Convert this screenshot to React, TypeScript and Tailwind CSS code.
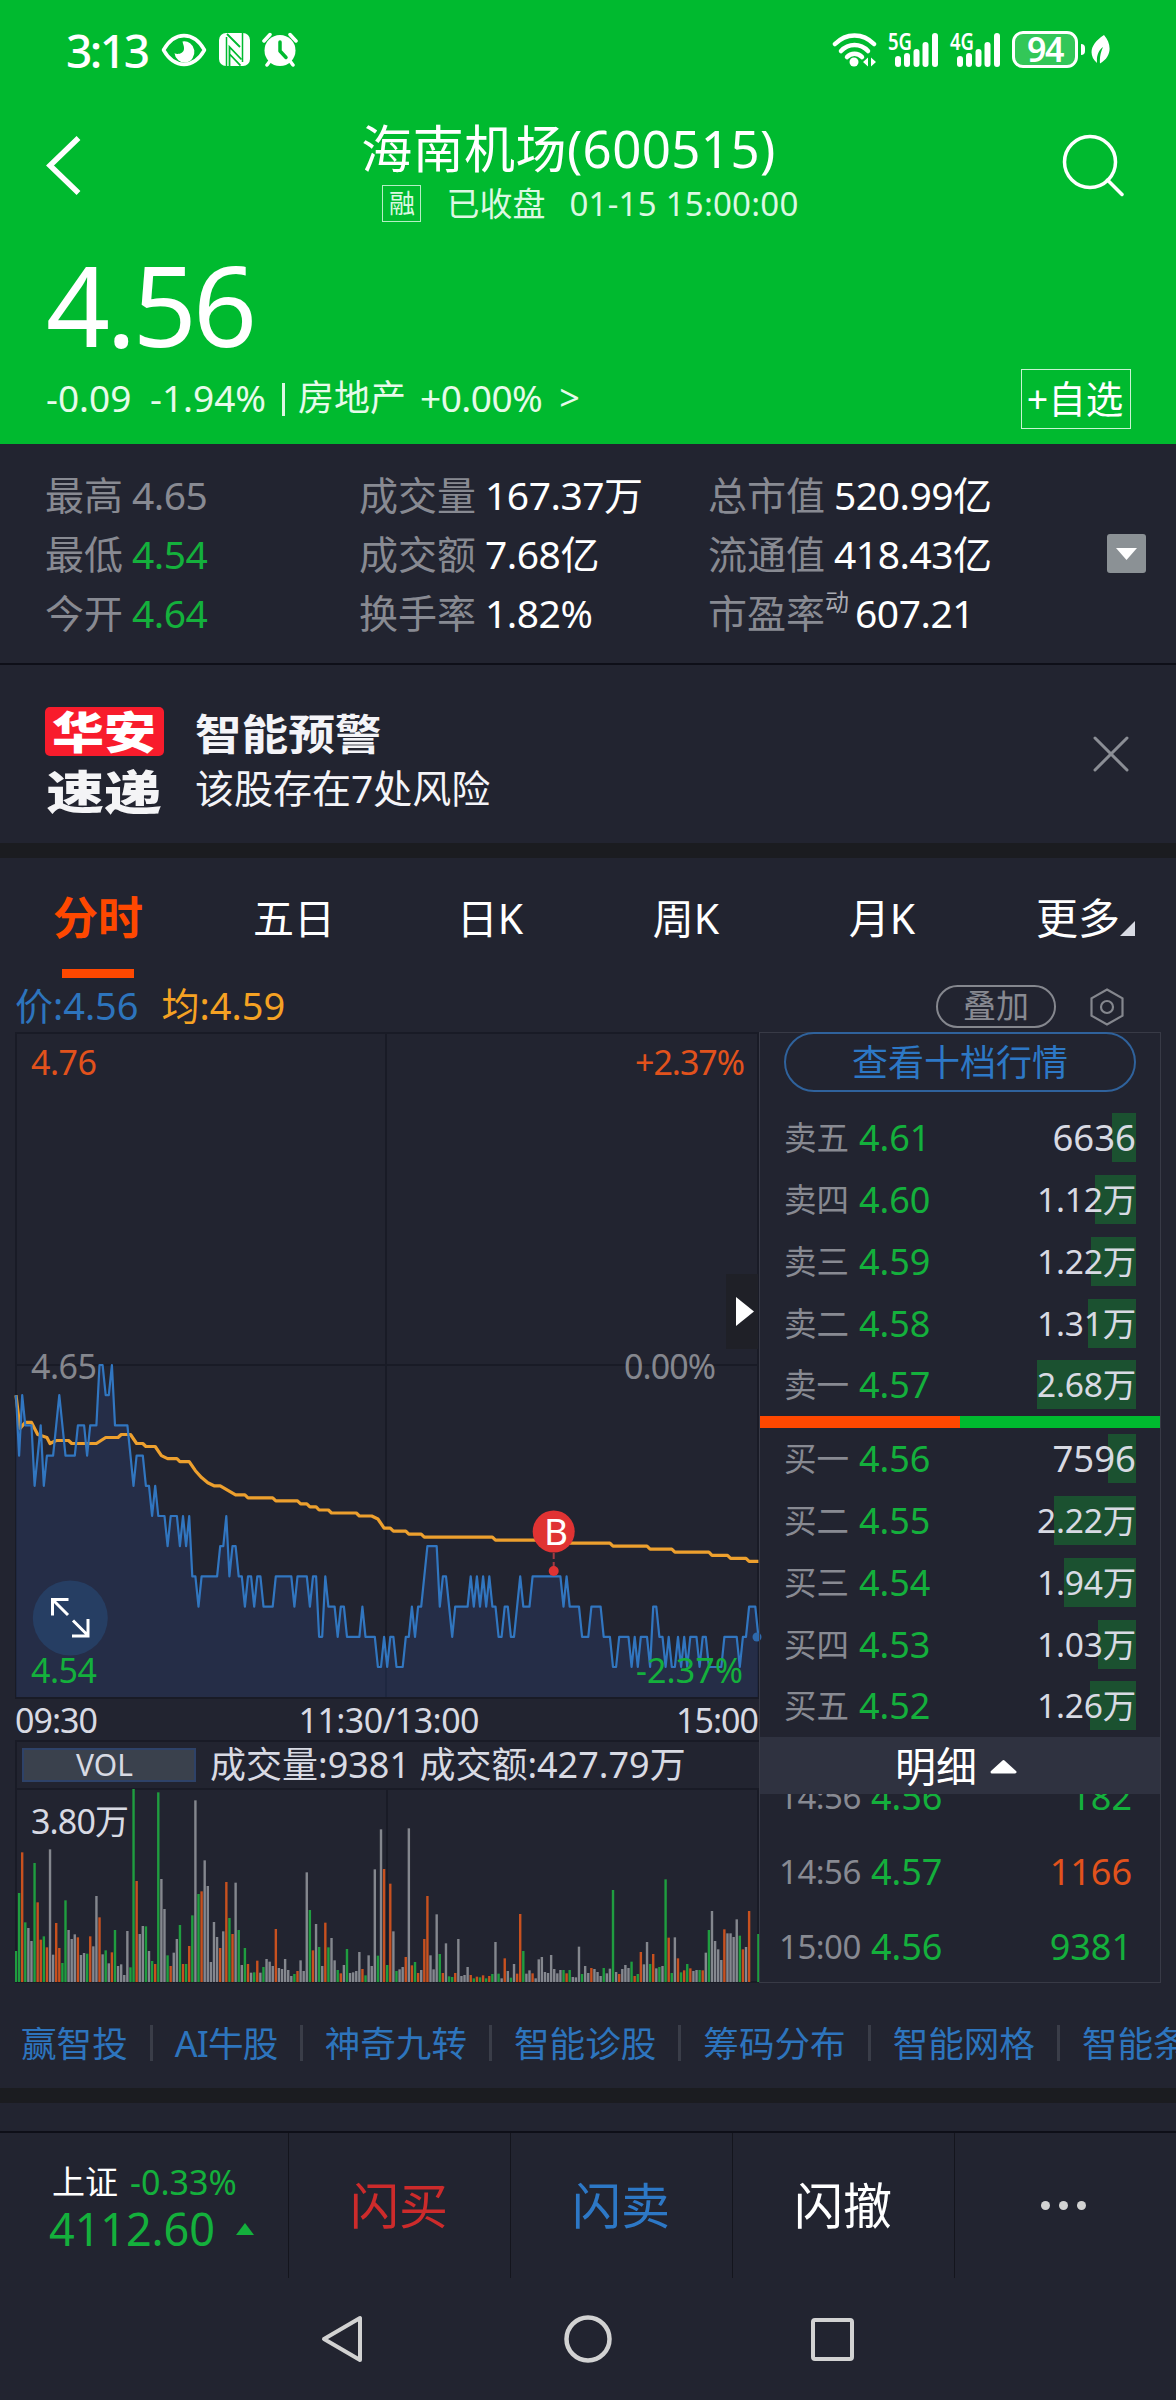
import { clsx } from 'clsx';

// Price per minute, in cents below the previous close (4.65), one hex digit each
const PRICES = (
  '1312224324' + '3332123333' + '2223222001' + '1022222343' + '3344545556' + '5556565778' +
  '7777776657' + '6677877877' + '8888777777' + '8777787799' + '7888988999' + '9989999aa9' +
  'a99aaa9989' + '8876666877' + '8988888787' + '8787889988' + '9987888777' + '7777777878' +
  '8889998888' + '999aa9999a' + '9a999a8899' + 'a9aa9a9a99' + '9a99aaaaa9' + '9999a99888' + '9'
).split('').map((c) => parseInt(c, 16));

// Average price: [minute, thousandths below the previous close]
const AVERAGE = [
  [0, 10], [1.3, 21], [3, 19], [5, 19], [7, 23], [10, 24], [11, 26], [13, 25], [17, 25], [18, 26],
  [26, 26], [29, 24], [33, 24], [34, 23], [37, 23], [39, 26], [41, 26], [42, 27], [45, 27], [47, 30],
  [49, 31], [52, 31], [53, 32], [56, 32], [58, 35], [60, 37.3], [62, 39], [64, 40], [66, 40], [71, 43],
  [74, 43], [75, 44], [83, 44], [84, 45], [91, 45], [92, 46], [94, 46], [95, 47], [97, 47], [98, 48],
  [101, 48], [102, 49], [110, 49], [111, 50], [115, 50], [117, 51], [119, 54], [121, 54], [122, 55],
  [126, 55], [127, 56], [131, 56], [132, 57], [154, 57], [155, 58], [173, 58], [174, 59], [192, 59],
  [193, 60], [204, 60], [205, 61], [212, 61], [213, 62], [224, 62], [225, 63], [230, 63], [231, 64],
  [236, 64], [237, 65], [240, 65],
];

// Volume per minute: direction (g fall, r rise, w flat) and height
const VOLUMES = `
g93 g267 r389 g179 w162 w123 g357 r239 r127 g137 r104 w398 w82 r177 r102 g57 g245 w156 w129 w143
r134 w81 w87 g85 r137 w107 w258 r194 w83 g95 w56 r89 g156 w48 w53 w21 w153 g44 g579 r303
w144 w168 g167 w93 g63 r54 g569 w309 w219 g80 r48 w88 w129 g171 r54 g54 r108 g200 w545 g264
r272 w365 w288 w60 w180 w135 r102 w152 r300 g192 r144 w298 g156 w51 g102 r54 w28 g29 r64 w28
g45 w69 w61 w48 r159 w42 w39 w69 w36 w18 g24 r33 w65 w33 w329 g216 r95 w174 g105 w48
r178 g104 w132 w65 g36 r26 w51 g99 w27 w29 w33 w90 r39 g20 w80 w48 w338 g79 w458 r339
g51 r295 w152 g33 w38 w45 r75 w461 r50 g60 r27 w36 r129 r258 w80 w38 w203 g84 r27 w116
g17 g15 r27 w129 w18 w21 w45 r21 g11 r16 g14 r20 g11 r18 g24 w120 g25 w11 r71 w33
g13 w54 r25 r204 g93 w25 w35 r26 w11 w68 w75 w30 w27 w81 w39 w26 w36 g36 r26 g36
w15 w14 w106 g24 w48 w27 r42 w39 w30 w18 g42 w26 w40 g276 w30 r24 w39 w51 w42 g61
r18 g24 r90 w53 w120 g54 r84 w41 g45 w48 g308 r133 g27 w134 r71 g29 r35 g54 r41 w33
w36 g36 r35 w88 g156 w213 w123 w98 w66 r158 w146 w146 w135 w188 g139 r98 w105 r213 w0 w0 g144
`.trim().split(/\s+/);

const VOLUME_COLORS: Record<string, string> = { g: '#1f9d3f', r: '#c8511f', w: '#84878e' };

const STEP = 3.0933;
const px = (minute: number) => 1 + minute * STEP;
const py = (cents: number) => 333 + cents * 30.2;

const pricePoints = PRICES.map((c, i) => `${px(i).toFixed(1)},${py(c).toFixed(1)}`).join(' ');
const averagePoints = AVERAGE.map(([m, t]) => `${px(m).toFixed(1)},${py(t / 10).toFixed(1)}`).join(' ');

const TABS = ['分时', '五日', '日K', '周K', '月K', '更多'];

const ASKS = [
  { label: '卖五', price: '4.61', volume: '6636', bar: 24 },
  { label: '卖四', price: '4.60', volume: '1.12万', bar: 41 },
  { label: '卖三', price: '4.59', volume: '1.22万', bar: 45 },
  { label: '卖二', price: '4.58', volume: '1.31万', bar: 48 },
  { label: '卖一', price: '4.57', volume: '2.68万', bar: 99 },
];

const BIDS = [
  { label: '买一', price: '4.56', volume: '7596', bar: 28 },
  { label: '买二', price: '4.55', volume: '2.22万', bar: 82 },
  { label: '买三', price: '4.54', volume: '1.94万', bar: 72 },
  { label: '买四', price: '4.53', volume: '1.03万', bar: 38 },
  { label: '买五', price: '4.52', volume: '1.26万', bar: 46 },
];

const TRADES = [
  { time: '14:56', price: '4.56', volume: '182', up: false },
  { time: '14:56', price: '4.57', volume: '1166', up: true },
  { time: '15:00', price: '4.56', volume: '9381', up: false },
];

const LINKS = ['赢智投', 'AI牛股', '神奇九转', '智能诊股', '筹码分布', '智能网格', '智能条件单'];

function SignalBars({ label }: { label: string }) {
  return (
    <svg className="h-[36px] w-[52px] overflow-visible" viewBox="0 0 52 36" fill="#fff">
      <text x="0" y="18" fontSize="23" fontWeight="600" textLength="24" lengthAdjust="spacingAndGlyphs">
        {label}
      </text>
      <rect x="7" y="24" width="6" height="11" rx="3" />
      <rect x="16" y="21" width="6" height="14" rx="3" />
      <rect x="25.500" y="17" width="6" height="18" rx="3" />
      <rect x="34.500" y="10" width="6" height="25" rx="3" />
      <rect x="44" y="1" width="6" height="34" rx="3" />
    </svg>
  );
}

function StatusBar() {
  return (
    <div className="flex h-[99px] items-center pl-[66px] pr-[66px]">
      <span className="w-[95px] text-[46px] font-medium leading-[60px] tracking-[-2.500px]">3:13</span>
      {/* Eye comfort */}
      <svg className="h-[34px] w-[46px]" viewBox="0 0 46 32" preserveAspectRatio="none">
        <path
          d="M2.500 16C8 7 15 2.500 23 2.500S38 7 43.500 16C38 25 31 29.500 23 29.500S8 25 2.500 16z"
          fill="none"
          stroke="#fff"
          strokeWidth="3.500"
          strokeLinejoin="round"
        />
        <path d="M21.500 8a10 10 0 1 1-8 11c3 1.500 9 .5 9.500-4 .3-3-1-4-1.500-7z" fill="#fff" />
      </svg>
      {/* NFC */}
      <svg className="ml-[12px] h-[33px] w-[31px]" viewBox="0 0 31 33">
        <rect width="31" height="33" rx="7" fill="#fff" />
        <path d="M7.500 4v29M23.500 0v29" stroke="#00ba2f" strokeWidth="1.500" />
        <path d="M10.500 33V14l12 12.500M8 1l13 13M10.500 21l11 11.500" fill="none" stroke="#00ba2f" strokeWidth="1.800" />
      </svg>
      {/* Alarm */}
      <svg className="ml-[12px] h-[35px] w-[36px]" viewBox="0 0 36 35">
        <circle cx="18" cy="18.500" r="15.500" fill="#fff" />
        <path d="M2 9l6-6.500M34 9l-6-6.500M8 29l-3 4M28 29l3 4" stroke="#fff" strokeWidth="3.500" strokeLinecap="round" />
        <path d="M18 10v9l6 6.500" fill="none" stroke="#00ba2f" strokeWidth="3.500" strokeLinecap="round" strokeLinejoin="round" />
      </svg>

      {/* Wi-Fi */}
      <svg className="ml-auto h-[36px] w-[46px]" viewBox="0 0 46 36" fill="none" stroke="#fff" strokeWidth="4.500" strokeLinecap="round">
        <path d="M3 12c11-11.500 28-11.500 39 0" />
        <path d="M9 19c7.500-8 19.500-8 27 0" />
        <path d="M15 25c4-4.500 11-4.500 15 0" />
        <circle cx="22" cy="30" r="4.500" fill="#fff" stroke="none" />
        <path d="M36 25.500v9l-5-4.500zM39 25.500v9l5-4.500z" fill="#fff" stroke="none" />
      </svg>
      <div className="ml-[10px] flex gap-[10px]">
        <SignalBars label="5G" />
        <SignalBars label="4G" />
      </div>
      {/* Battery */}
      <div className="ml-[10px] flex items-center">
        <div className="flex h-[37px] w-[66px] items-center justify-center rounded-[11px] border-[3px] border-white bg-white/20">
          <span className="text-[34px] font-semibold leading-[31px] tracking-[-1.500px]">94</span>
        </div>
        <div className="ml-[3px] h-[11px] w-[4px] rounded-r bg-white" />
      </div>
      <svg className="ml-[6px] h-[30px] w-[19px]" viewBox="0 0 19 30">
        <path d="M13 0c8 9 8 22-4 28.500-.5-5.500.5-11 3-16.500-5 4-6.500 9-6 16C-3 20-1 9 13 0z" fill="#fff" />
      </svg>
    </div>
  );
}

function Header() {
  return (
    <header className="h-[444px] bg-[#00ba2f] text-white">
      <StatusBar />
      <div className="flex h-[137px] items-start justify-between pl-[46px] pr-[52px]">
        <svg className="mt-[36px] h-[60px] w-[36px]" viewBox="0 0 36 60" fill="none" stroke="#fff" strokeWidth="5.500">
          <path d="M32.500 3L4 30.500 32.500 58" />
        </svg>
        <div className="-ml-[7px] mt-[14px] flex flex-col items-center">
          <h1 className="whitespace-nowrap text-[51px] leading-[70px] tracking-[0.400px]">海南机场(600515)</h1>
          <div className="ml-[44px] mt-[2px] flex h-[37px] items-center whitespace-nowrap text-[33px] leading-[37px] text-[#dcf8e2]">
            <span className="mr-[25px] flex h-[37px] w-[39px] items-center justify-center border border-[#b5efc4] text-[26px]">
              融
            </span>
            <span>已收盘</span>
            <span className="ml-[24px] tracking-[0.250px]">01-15 15:00:00</span>
          </div>
        </div>
        <svg className="mt-[35px] h-[64px] w-[62px]" viewBox="0 0 62 64" fill="none" stroke="#fff" strokeWidth="3.500" strokeLinecap="round">
          <circle cx="28" cy="28" r="25.500" />
          <path d="M45.500 46L60 60.500" />
        </svg>
      </div>
      <div className="h-[133px] pl-[46px] text-[112px] leading-[136px] tracking-[-3.700px]">4.56</div>
      <div className="flex h-[60px] items-center whitespace-nowrap pl-[46px] pr-[45px] text-[37px] leading-[60px] text-[#e6fbea]">
        <span className="-mt-[3px] w-[104px]">-0.09</span>
        <span className="-mt-[3px] w-[132px]">-1.94%</span>
        <span className="h-[33px] w-[3px] bg-[#dcf8e2]" />
        <span className="-mt-[3px] ml-[13px] text-[36px]">房地产</span>
        <span className="-mt-[3px] ml-[14px] tracking-[-0.500px]">+0.00%</span>
        <span className="-mt-[3px] ml-[17px] text-[36px]">&gt;</span>
        <button className="ml-auto flex h-[60px] w-[110px] items-center justify-center border border-[#c8f4d2] pr-[2px] text-[37.500px] text-white">
          +自选
        </button>
      </div>
    </header>
  );
}

function Stat({ label, sup, value, tone }: { label: string; sup?: string; value: string; tone?: string }) {
  return (
    <div className="flex h-[59px] items-center whitespace-nowrap text-[39px] leading-[59px]">
      <span className="text-[#888a92]">{label}</span>
      {sup && <span className="mb-[22px] text-[24px] leading-[24px] text-[#a9abb2]">{sup}</span>}
      <span className={clsx('tracking-[-0.500px]', sup ? 'ml-[6px]' : 'ml-[9px]', tone ?? 'text-white')}>{value}</span>
    </div>
  );
}

function Stats() {
  return (
    <section className="flex h-[221px] items-start border-b-2 border-[#0e0f18] pl-[45px] pt-[21px]">
      <div className="w-[314px]">
        <Stat label="最高" value="4.65" tone="text-[#888a92]" />
        <Stat label="最低" value="4.54" tone="text-[#14b03c]" />
        <Stat label="今开" value="4.64" tone="text-[#14b03c]" />
      </div>
      <div className="w-[349px]">
        <Stat label="成交量" value="167.37万" />
        <Stat label="成交额" value="7.68亿" />
        <Stat label="换手率" value="1.82%" />
      </div>
      <div className="w-[399px]">
        <Stat label="总市值" value="520.99亿" />
        <Stat label="流通值" value="418.43亿" />
        <Stat label="市盈率" sup="动" value="607.21" />
      </div>
      <button className="mt-[69px] flex h-[39px] w-[39px] items-center justify-center rounded-[3px] bg-[#8b9195]">
        <svg className="h-[12px] w-[21px]" viewBox="0 0 21 12">
          <path d="M0 0h21L10.500 12z" fill="#fff" />
        </svg>
      </button>
    </section>
  );
}

function Alert() {
  return (
    <section className="flex h-[178px] items-start pl-[45px] pr-[47px] pt-[41px]">
      <div className="mt-px w-[150px] text-[44px] font-black leading-[48px] text-white">
        <div className="flex h-[49px] w-[119px] items-center justify-center rounded-[5px] bg-[#f81c2c]">
          <span className="-ml-[2px] inline-block scale-x-[1.180]">华安</span>
        </div>
        <div className="mt-[11px] flex w-[117px] justify-center text-[46px] text-[#f4f4f6]">
          <span className="inline-block scale-x-[1.250]">速递</span>
        </div>
      </div>
      <div className="whitespace-nowrap text-[#f4f4f8]">
        <div className="origin-left scale-x-[1.110] text-[42px] font-bold leading-[56px]">智能预警</div>
        <div className="text-[39px] leading-[52px]">该股存在7处风险</div>
      </div>
      <svg className="ml-auto mt-[30px] h-[36px] w-[36px]" viewBox="0 0 36 36" stroke="#8b8e95" strokeWidth="3" strokeLinecap="round">
        <path d="M2 2l32 32M34 2L2 34" />
      </svg>
    </section>
  );
}

function Tabs() {
  return (
    <nav className="grid h-[120px] grid-cols-6 text-[41px] text-white">
      {TABS.map((tab, i) => (
        <div key={tab} className="flex flex-col items-center pt-[30px]">
          {i === 0 ? (
            <>
              <span className="text-[45px] font-bold leading-[60px] text-[#ff4800]">{tab}</span>
              <span className="mt-[21px] h-[9px] w-[72px] bg-[#ff4800]" />
            </>
          ) : (
            <span className={clsx('flex items-end leading-[60px]', i === 5 && 'pl-[15px] text-[42px]')}>
              {tab}
              {i === 5 && (
                <svg className="mb-[12px] h-[15px] w-[15px]" viewBox="0 0 15 15">
                  <path d="M15 0v15H0z" fill="#d8dae3" />
                </svg>
              )}
            </span>
          )}
        </div>
      ))}
    </nav>
  );
}

function Legend() {
  return (
    <div className="flex h-[54px] items-center pl-[15px] pr-[52px] text-[38px] leading-[54px]">
      <span className="text-[#2d74bd]">价:4.56</span>
      <span className="ml-[23px] text-[#f5a223]">均:4.59</span>
      <button className="ml-auto mt-[2px] flex h-[43px] w-[120px] items-center justify-center rounded-full border-2 border-[#85878e] text-[33px] leading-[38px] text-[#888a92]">
        叠加
      </button>
      <svg className="ml-[34px] mt-[3px] h-[38px] w-[34px]" viewBox="0 0 34 38" fill="none" stroke="#85878e" strokeWidth="2.200">
        <path d="M17 1.500l15.500 8.800v17.400L17 36.500 1.500 27.700V10.300z" />
        <circle cx="17" cy="19" r="6" />
      </svg>
    </div>
  );
}

function PriceChart() {
  return (
    <svg className="block h-[708px] w-[744px] overflow-visible" viewBox="0 0 744 708" fontSize="34">
      <g fill="none" stroke="#191b26" strokeWidth="2">
        <path d="M1 666V1h742v665M371 1v665M1 333h741" />
      </g>
      <polygon points={`1,665 ${pricePoints} 743,665`} fill="#2a427a" fillOpacity="0.320" />
      <path d="M0 666h744" stroke="#191b26" strokeWidth="2" />
      <polyline points={averagePoints} fill="none" stroke="#eda02e" strokeWidth="3.200" strokeLinejoin="round" />
      <polyline points={pricePoints} fill="none" stroke="#3176c0" strokeWidth="2.200" strokeLinejoin="round" />
      <circle cx="742" cy="605" r="4.500" fill="#2d69ad" />

      {/* Buy marker */}
      <path d="M538.700 521v16" stroke="#a33a42" strokeWidth="2" strokeDasharray="6 3" />
      <circle cx="538.700" cy="539" r="5" fill="#e03333" />
      <circle cx="538.700" cy="499.500" r="21" fill="#e03333" />
      <text x="541" y="513" fontSize="37" fill="#fff" textAnchor="middle">B</text>

      {/* Full screen button */}
      <circle cx="55.300" cy="586" r="37.500" fill="#263e63" />
      <path d="M37.500 583.500v-16h16M39 569l14 14M73 587v17H57M72 602.500L58 588.500" fill="none" stroke="#fff" strokeWidth="3" />

      <text x="16" y="43" fill="#e2521c" textLength="66">4.76</text>
      <text x="730" y="43" fill="#e2521c" textAnchor="end" textLength="110">+2.37%</text>
      <text x="16" y="347" fill="#85878e" textLength="66">4.65</text>
      <text x="701" y="347" fill="#85878e" textAnchor="end" textLength="92">0.00%</text>
      <text x="16" y="651" fill="#14b03c" textLength="66">4.54</text>
      <text x="728" y="651" fill="#14b03c" textAnchor="end" textLength="107">-2.37%</text>

      {/* Side panel toggle */}
      <rect x="711" y="242" width="32" height="75" fill="#1f2027" />
      <path d="M721 265l18 14.500L721 294z" fill="#fff" />

      <g fill="#d8dae3">
        <text x="0" y="701" textLength="83">09:30</text>
        <text x="374" y="701" textAnchor="middle" textLength="181">11:30/13:00</text>
        <text x="744" y="701" textAnchor="end" textLength="83">15:00</text>
      </g>
    </svg>
  );
}

function VolumeChart() {
  return (
    <div>
      <div className="flex h-[48px] items-center whitespace-nowrap border-l-2 border-t-2 border-[#191b26] pl-[5px] text-[#d8dae3]">
        <span className="flex h-[34px] w-[174px] items-center justify-center border-2 border-[#2e4268] bg-[#3a414d] pr-[9px] text-[30px] leading-[30px]">
          VOL
        </span>
        <span className="ml-[14px] text-[36px] leading-[46px]">成交量:9381 成交额:427.79万</span>
      </div>
      <svg className="block h-[195px] w-[744px]" viewBox="0 0 744 195">
        <path d="M0 1h743v193H1V1M372 1v193" fill="none" stroke="#191b26" strokeWidth="2" />
        {VOLUMES.map((v, i) => {
          const h = Number(v.slice(1)) / 3;
          return <rect key={i} x={px(i) - 1.2} y={194 - h} width="2.400" height={h} fill={VOLUME_COLORS[v[0]]} />;
        })}
        <text x="16" y="46" fontSize="34" fill="#d8dae3" textLength="98">3.80万</text>
      </svg>
    </div>
  );
}

function OrderRow({ label, price, volume, bar }: { label: string; price: string; volume: string; bar: number }) {
  return (
    <div className="relative flex h-[61.750px] items-center pl-[24px] pr-[24px] text-[36px] leading-[49px]">
      <span className="absolute right-[24px] h-[49px] bg-[#1b5130]" style={{ width: bar }} />
      <span className="text-[32.500px] text-[#888a92]">{label}</span>
      <span className="ml-[10px] text-[#14b03c]">{price}</span>
      <span
        className={clsx(
          'relative ml-auto text-[#d8dae3]',
          volume.endsWith('万') ? 'text-[33.500px] tracking-[-0.200px]' : 'text-[36.500px]'
        )}
      >
        {volume}
      </span>
    </div>
  );
}

function OrderBook() {
  return (
    <aside className="flex h-[951px] w-[402px] flex-col border border-[#383a46]">
      <button className="mx-[24px] -mt-px flex h-[60px] shrink-0 items-center justify-center rounded-full border-2 border-[#2f629c] pt-px text-[36px] leading-[56px] text-[#2d78c6]">
        查看十档行情
      </button>
      <div className="mt-[15px] h-[309px] shrink-0">
        {ASKS.map((row) => (
          <OrderRow key={row.label} {...row} />
        ))}
      </div>
      <div className="flex h-[12px] shrink-0">
        <div className="w-1/2 bg-[#ff4800]" />
        <div className="w-1/2 bg-[#00ba2f]" />
      </div>
      <div className="h-[309px] shrink-0">
        {BIDS.map((row) => (
          <OrderRow key={row.label} {...row} />
        ))}
      </div>
      <div className="flex h-[57px] shrink-0 items-center justify-center gap-[13px] bg-[#2f3240] pr-[8px] pt-px text-[41px] leading-[56px] text-white">
        明细
        <svg className="h-[15px] w-[27px]" viewBox="0 0 27 15">
          <path d="M13.500 2.500L25 13H2z" fill="#fff" stroke="#fff" strokeWidth="3" strokeLinejoin="round" />
        </svg>
      </div>
      {/* Trade list is scrolled to its end, the first row is cut off */}
      <div className="flex h-[188px] flex-col justify-end overflow-hidden">
        {TRADES.map((trade, i) => (
          <div key={i} className="flex h-[75px] shrink-0 items-center pl-[19px] pr-[28px] pt-[4px] text-[36px] leading-[60px]">
            <span className="w-[92px] text-[33px] tracking-[-0.500px] text-[#888a92]">{trade.time}</span>
            <span className="text-[#14b03c]">{trade.price}</span>
            <span className={clsx('ml-auto', trade.up ? 'text-[#e2521c]' : 'text-[#14b03c]')}>{trade.volume}</span>
          </div>
        ))}
      </div>
    </aside>
  );
}

function Links() {
  return (
    <div className="flex h-[105px] items-center overflow-hidden whitespace-nowrap pl-[21px] pt-[14px] text-[35.600px] leading-[48px] text-[#2d74bd]">
      {LINKS.map((link, i) => (
        <div key={link} className={clsx('flex shrink-0 items-center', i === 1 && 'tracking-[-0.750px]')}>
          {i > 0 && <span className="mx-[22px] h-[36px] w-[3px] bg-[#3a3d48]" />}
          {link}
        </div>
      ))}
    </div>
  );
}

function Toolbar() {
  return (
    <footer className="flex h-[147px] border-t-2 border-[#0e0f18] text-[49px]">
      <div className="w-[288px] pl-[49px] pt-[24px]">
        <div className="flex items-center whitespace-nowrap pl-[3px] text-[33px] leading-[50px]">
          <span className="text-white">上证</span>
          <span className="ml-[12px] text-[34px] text-[#14b03c]">-0.33%</span>
        </div>
        <div className="flex items-center text-[45px] leading-[44px] tracking-[-0.100px] text-[#14b03c]">
          4112.60
          <svg className="ml-[21px] h-[12px] w-[18px]" viewBox="0 0 18 12">
            <path d="M9 0l9 12H0z" fill="#14b03c" />
          </svg>
        </div>
      </div>
      <button className="w-[222px] border-l border-[#14151d] pr-px text-[#cd2b2b]">闪买</button>
      <button className="w-[222px] border-l border-[#14151d] pr-px text-[#2d78c6]">闪卖</button>
      <button className="w-[222px] border-l border-[#14151d] pr-px text-white">闪撤</button>
      <button className="flex w-[222px] items-center justify-center gap-[9px] border-l border-[#14151d] pr-[4px]">
        <span className="h-[9px] w-[9px] rounded-full bg-[#d2d2d2]" />
        <span className="h-[9px] w-[9px] rounded-full bg-[#d2d2d2]" />
        <span className="h-[9px] w-[9px] rounded-full bg-[#d2d2d2]" />
      </button>
    </footer>
  );
}

function SystemNav() {
  return (
    <div className="flex h-[122px] items-center pl-[320px]">
      <svg className="h-[50px] w-[44px]" viewBox="0 0 44 50" fill="none" stroke="#d2d2d2" strokeWidth="4" strokeLinejoin="round">
        <path d="M40 4v42L4 25z" />
      </svg>
      <svg className="ml-[200px] h-[48px] w-[48px]" viewBox="0 0 48 48" fill="none" stroke="#d2d2d2" strokeWidth="4.500">
        <circle cx="24" cy="24" r="21.500" />
      </svg>
      <div className="ml-[199px] h-[43px] w-[43px] rounded-[4px] border-4 border-[#d2d2d2]" />
    </div>
  );
}

export default function App() {
  return (
    <div className="flex h-[2400px] w-[1176px] flex-col overflow-hidden bg-[#222430] font-['Noto_Sans','Noto_Sans_CJK_SC',sans-serif]">
      <Header />
      <Stats />
      <Alert />
      <div className="h-[15px] bg-[#1b1c20]" />
      <Tabs />
      <Legend />
      <main className="flex h-[951px] pl-[15px]">
        <div className="w-[744px]">
          <PriceChart />
          <VolumeChart />
        </div>
        <OrderBook />
      </main>
      <Links />
      <div className="mb-[28px] h-[15px] bg-[#1b1c20]" />
      <Toolbar />
      <SystemNav />
    </div>
  );
}
